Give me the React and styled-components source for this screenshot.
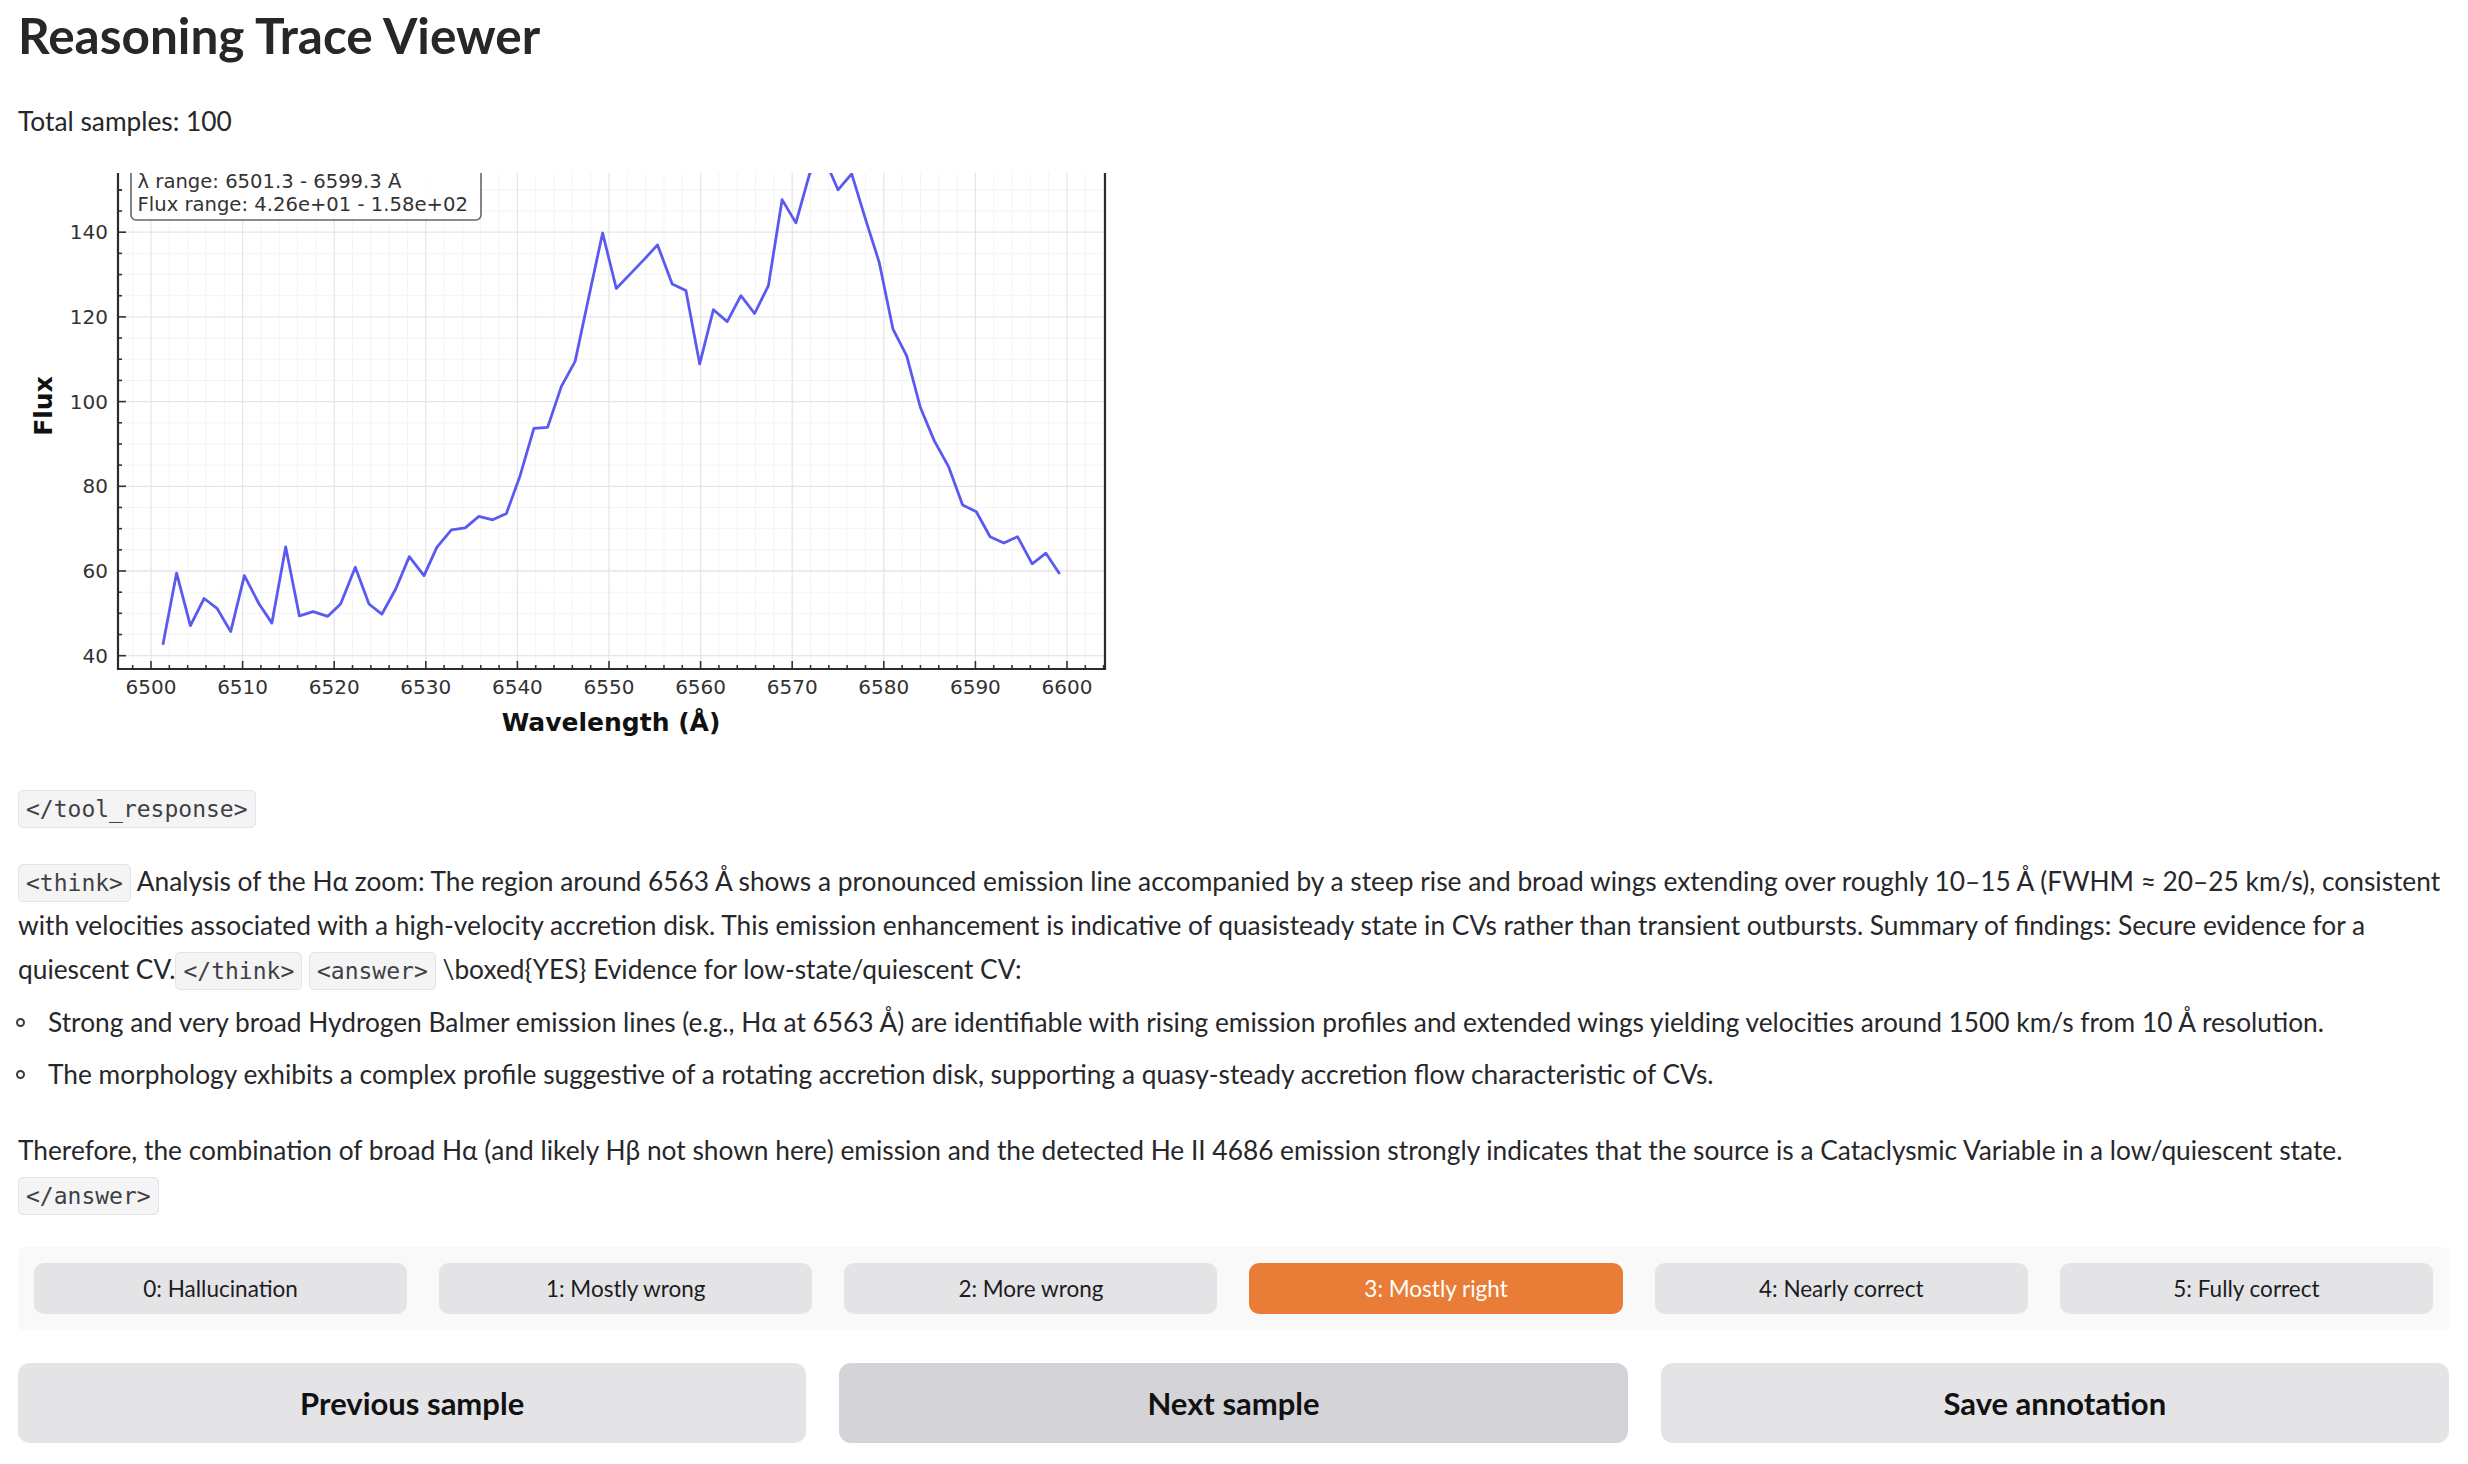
import React from 'react';
import styled, { createGlobalStyle } from 'styled-components';

const GlobalStyle = createGlobalStyle`
  html, body {
    margin: 0;
    padding: 0;
    background: #ffffff;
  }
  body {
    font-family: Lato, "Noto Sans", "Liberation Sans", sans-serif;
    color: #27272a;
  }
`;

const Page = styled.div`
  width: 2468px;
  box-sizing: border-box;
  padding: 6px 19px 24px 18px;
`;

const Title = styled.h1`
  margin: 0;
  font-size: 49.5px;
  line-height: 58px;
  font-weight: 700;
  color: #27272a;
`;

const Meta = styled.p`
  margin: 35px 0 0;
  font-size: 26.3px;
  line-height: 44px;
`;

const ChartFrame = styled.div`
  margin-top: 30px;
  width: 1110px;
  height: 572px;
  overflow: hidden;
`;

const Prose = styled.div`
  margin-top: 40px;
  font-size: 26.3px;
  line-height: 44px;
  color: #27272a;
`;

const Para = styled.p`
  margin: ${({ $gap }) => $gap || '0'} 0 0;
`;

const Code = styled.code`
  font-family: "DejaVu Sans Mono", "Liberation Mono", monospace;
  font-size: 23px;
  line-height: 1;
  padding: 5px 7px;
  background: #f4f4f5;
  border: 1px solid #e4e4e7;
  border-radius: 5px;
  color: #3f3f46;
`;

const BulletList = styled.ul`
  list-style: none;
  margin: 9px 0 0;
  padding: 0;
`;

const Bullet = styled.li`
  position: relative;
  padding-left: 30px;
  margin-bottom: 8px;

  &::before {
    content: '';
    position: absolute;
    left: -2px;
    top: 18px;
    width: 5px;
    height: 5px;
    border: 2px solid #3a3a3f;
    border-radius: 50%;
  }
`;

const RatingBar = styled.div`
  margin-top: 31px;
  display: grid;
  grid-template-columns: repeat(6, 1fr);
  gap: 32px;
  padding: 16px;
  background: #f9f9f9;
  border-radius: 6px;
`;

const RatingButton = styled.button`
  height: 51px;
  border: none;
  border-radius: 10px;
  font-family: Lato, "Noto Sans", sans-serif;
  font-size: 22.5px;
  background: ${({ $active }) => ($active ? '#e97d37' : '#e4e4e7')};
  color: ${({ $active }) => ($active ? '#ffffff' : '#1c1c1e')};
  cursor: pointer;
`;

const ActionRow = styled.div`
  margin-top: 33px;
  display: grid;
  grid-template-columns: repeat(3, 1fr);
  gap: 33px;
`;

const ActionButton = styled.button`
  height: 80px;
  border: none;
  border-radius: 12px;
  font-family: Lato, "Noto Sans", sans-serif;
  font-size: 31px;
  font-weight: 700;
  color: #111111;
  background: ${({ $tone }) => ($tone === 'dark' ? '#d4d4d8' : '#e4e4e7')};
  cursor: pointer;
`;

const spectrum = [
  [6501.3, 42.6], [6502.8, 59.5], [6504.3, 47.1], [6505.8, 53.5], [6507.2, 51.2],
  [6508.7, 45.7], [6510.2, 58.9], [6511.8, 52.2], [6513.2, 47.7], [6514.7, 65.7],
  [6516.2, 49.4], [6517.7, 50.4], [6519.3, 49.3], [6520.7, 52.2], [6522.3, 60.9],
  [6523.8, 52.2], [6525.2, 49.8], [6526.7, 55.7], [6528.2, 63.4], [6529.8, 58.9],
  [6531.2, 65.6], [6532.8, 69.7], [6534.3, 70.2], [6535.8, 72.9], [6537.3, 72.1],
  [6538.8, 73.6], [6540.3, 82.5], [6541.8, 93.7], [6543.3, 93.9], [6544.8, 103.6],
  [6546.3, 109.5], [6547.8, 124.7], [6549.3, 139.8], [6550.8, 126.7], [6552.3, 130.1],
  [6553.9, 133.7], [6555.3, 137.0], [6556.9, 127.8], [6558.4, 126.2], [6559.9, 108.9],
  [6561.4, 121.7], [6562.9, 118.9], [6564.4, 125.0], [6565.9, 120.8], [6567.4, 127.4],
  [6568.9, 147.7], [6570.4, 142.2], [6571.9, 153.8], [6573.4, 158.0], [6575.0, 150.0],
  [6576.5, 153.8], [6578.0, 143.1], [6579.5, 132.9], [6581.0, 117.1], [6582.5, 110.8],
  [6584.0, 98.6], [6585.5, 90.8], [6587.1, 84.5], [6588.6, 75.6], [6590.1, 74.0],
  [6591.6, 68.1], [6593.1, 66.6], [6594.6, 68.1], [6596.2, 61.7], [6597.7, 64.2],
  [6599.2, 59.3],
];

// plot coordinates
const X = (w) => 133 + (w - 6500) * 9.16;
const Y = (v) => 482.7 - (v - 40) * 4.235;
const LEFT = 100;
const RIGHT = 1087;
const BOTTOM = 496;

const range = (a, b, step) => {
  const out = [];
  for (let v = a; v <= b + 1e-9; v += step) out.push(Math.round(v * 100) / 100);
  return out;
};

const SpectrumChart = () => {
  const xMajor = range(6500, 6600, 10);
  const xMinor = range(6498, 6604, 2).filter((w) => w % 10 !== 0);
  const yMajor = range(40, 140, 20);
  const yMinor = range(35, 160, 5).filter((v) => v % 20 !== 0 && Y(v) < BOTTOM);
  const path = spectrum.map(([w, v], i) => `${i ? 'L' : 'M'}${X(w).toFixed(1)} ${Y(v).toFixed(1)}`).join(' ');

  return (
    <svg width="1110" height="572" viewBox="0 0 1110 572" fontFamily="'DejaVu Sans', sans-serif">
      <g stroke="#f4f4f4" strokeWidth="1">
        {xMinor.map((w) => <line key={`gx${w}`} x1={X(w)} x2={X(w)} y1="0" y2={BOTTOM} />)}
        {yMinor.map((v) => <line key={`gy${v}`} x1={LEFT} x2={RIGHT} y1={Y(v)} y2={Y(v)} />)}
      </g>
      <g stroke="#e6e6e6" strokeWidth="1.3">
        {xMajor.map((w) => <line key={`Gx${w}`} x1={X(w)} x2={X(w)} y1="0" y2={BOTTOM} />)}
        {yMajor.map((v) => <line key={`Gy${v}`} x1={LEFT} x2={RIGHT} y1={Y(v)} y2={Y(v)} />)}
      </g>

      <path d={path} fill="none" stroke="#5a5af2" strokeWidth="2.8" strokeLinejoin="round" />

      <g stroke="#333" strokeWidth="1.6">
        {xMajor.map((w) => <line key={`tx${w}`} x1={X(w)} x2={X(w)} y1={BOTTOM} y2={BOTTOM - 8} />)}
        {xMinor.map((w) => <line key={`mx${w}`} x1={X(w)} x2={X(w)} y1={BOTTOM} y2={BOTTOM - 4} />)}
        {yMajor.map((v) => <line key={`ty${v}`} x1={LEFT} x2={LEFT + 8} y1={Y(v)} y2={Y(v)} />)}
        {[...yMinor, 150].map((v) => <line key={`my${v}`} x1={LEFT} x2={LEFT + 4} y1={Y(v)} y2={Y(v)} />)}
      </g>

      <g fill="none" stroke="#2b2b2b" strokeWidth="2.2">
        <line x1={LEFT} x2={LEFT} y1="0" y2={BOTTOM + 1} />
        <line x1={RIGHT} x2={RIGHT} y1="0" y2={BOTTOM + 1} />
        <line x1={LEFT - 1} x2={RIGHT + 1} y1={BOTTOM} y2={BOTTOM} />
      </g>

      <rect x="113" y="-14" width="350" height="61" rx="5" fill="#ffffff" fillOpacity="0.85" stroke="#666" strokeWidth="1.6" />
      <g fontSize="19.6" fill="#333">
        <text x="119.5" y="15">λ range: 6501.3 - 6599.3 Å</text>
        <text x="119.5" y="38">Flux range: 4.26e+01 - 1.58e+02</text>
      </g>

      <g fontSize="20" fill="#333">
        {yMajor.map((v) => (
          <text key={`ly${v}`} x="90" y={Y(v)} textAnchor="end" dominantBaseline="central">{v}</text>
        ))}
        {xMajor.map((w) => (
          <text key={`lx${w}`} x={X(w)} y="521" textAnchor="middle">{w}</text>
        ))}
      </g>

      <text x="593" y="558" textAnchor="middle" fontSize="25" fontWeight="700" fill="#111">Wavelength (Å)</text>
      <text x="25" y="233" transform="rotate(-90 25 233)" textAnchor="middle" dominantBaseline="central" fontSize="25" fontWeight="700" fill="#111">Flux</text>
    </svg>
  );
};

const ratings = ['0: Hallucination', '1: Mostly wrong', '2: More wrong', '3: Mostly right', '4: Nearly correct', '5: Fully correct'];

export default function App() {
  return (
    <>
      <GlobalStyle />
      <Page>
        <Title>Reasoning Trace Viewer</Title>
        <Meta>Total samples: 100</Meta>

        <ChartFrame>
          <SpectrumChart />
        </ChartFrame>

        <Prose>
          <Para><Code>&lt;/tool_response&gt;</Code></Para>
          <Para $gap="30px">
            <Code>&lt;think&gt;</Code> Analysis of the Hα zoom: The region around 6563 Å shows a pronounced emission line accompanied by a steep rise and broad wings extending over roughly 10–15 Å (FWHM ≈ 20–25 km/s), consistent<br />
            with velocities associated with a high-velocity accretion disk. This emission enhancement is indicative of quasisteady state in CVs rather than transient outbursts. Summary of findings: Secure evidence for a<br />
            quiescent CV.<Code>&lt;/think&gt;</Code> <Code>&lt;answer&gt;</Code> \boxed{'{'}YES{'}'} Evidence for low-state/quiescent CV:
          </Para>
          <BulletList>
            <Bullet>Strong and very broad Hydrogen Balmer emission lines (e.g., Hα at 6563 Å) are identifiable with rising emission profiles and extended wings yielding velocities around 1500 km/s from 10 Å resolution.</Bullet>
            <Bullet>The morphology exhibits a complex profile suggestive of a rotating accretion disk, supporting a quasy-steady accretion flow characteristic of CVs.</Bullet>
          </BulletList>
          <Para $gap="32px">
            Therefore, the combination of broad Hα (and likely Hβ not shown here) emission and the detected He II 4686 emission strongly indicates that the source is a Cataclysmic Variable in a low/quiescent state.<br />
            <Code>&lt;/answer&gt;</Code>
          </Para>
        </Prose>

        <RatingBar>
          {ratings.map((label, i) => (
            <RatingButton key={label} $active={i === 3}>{label}</RatingButton>
          ))}
        </RatingBar>

        <ActionRow>
          <ActionButton>Previous sample</ActionButton>
          <ActionButton $tone="dark">Next sample</ActionButton>
          <ActionButton>Save annotation</ActionButton>
        </ActionRow>
      </Page>
    </>
  );
}
